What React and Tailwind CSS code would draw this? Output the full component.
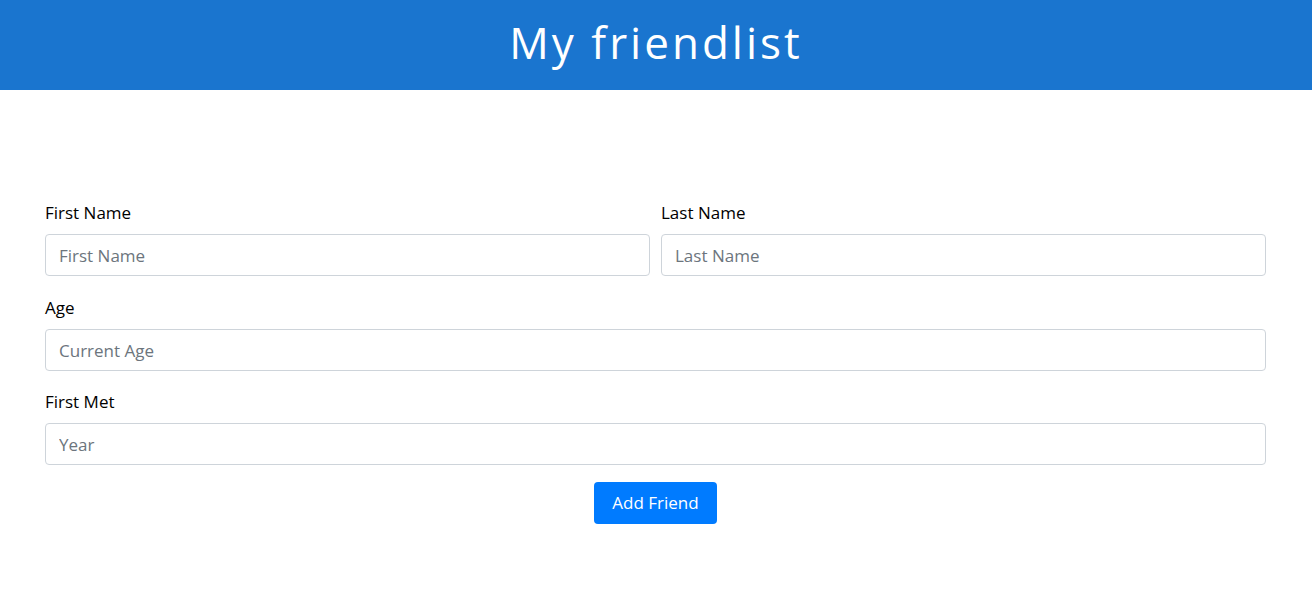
import React from 'react';

const Field = ({ label, placeholder }) => (
  <div className="flex flex-col flex-1">
    <label className="text-[17px] text-black leading-[24px] mb-[9px]">{label}</label>
    <input
      type="text"
      placeholder={placeholder}
      className="h-[42px] w-full border border-[#ced4da] rounded-[4px] px-[13px] text-[17px] text-[#495057] placeholder:text-[#6c757d] outline-none"
    />
  </div>
);

export default function App() {
  return (
    <div className="min-h-screen bg-white font-['Open_Sans',sans-serif]">
      <header className="h-[90px] bg-[#1a75cf] flex items-center justify-center pb-[6px]">
        <h1 className="text-[44px] text-white tracking-[3px] leading-none">My friendlist</h1>
      </header>

      <form className="pl-[45px] pr-[46px] pt-[111px]" onSubmit={(e) => e.preventDefault()}>
        <div className="flex gap-[11px] mb-[20px]">
          <Field label="First Name" placeholder="First Name" />
          <Field label="Last Name" placeholder="Last Name" />
        </div>
        <div className="mb-[19px]">
          <Field label="Age" placeholder="Current Age" />
        </div>
        <div className="mb-[17px]">
          <Field label="First Met" placeholder="Year" />
        </div>
        <div className="flex justify-center">
          <button className="h-[42px] px-[18px] bg-[#007bff] text-white text-[17px] rounded-[4px]">
            Add Friend
          </button>
        </div>
      </form>
    </div>
  );
}
